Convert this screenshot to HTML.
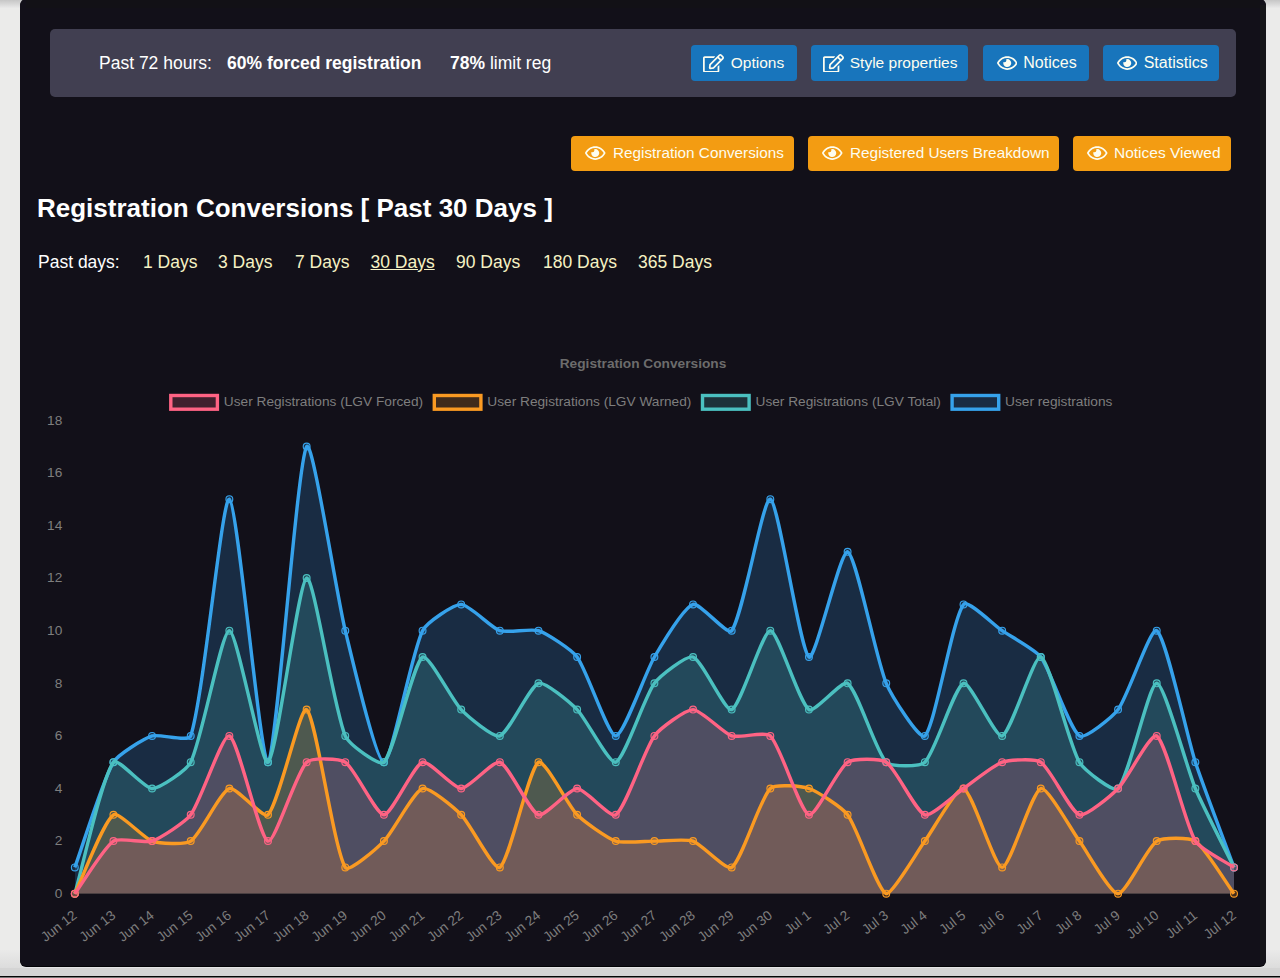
<!DOCTYPE html>
<html><head><meta charset="utf-8"><style>
html,body{margin:0;padding:0}
body{width:1280px;height:978px;overflow:hidden;position:relative;background:#ebebea;font-family:"Liberation Sans",sans-serif}
.topgrad{position:absolute;left:0;top:0;width:1280px;height:8px;background:linear-gradient(#c6c6c6,#e9e9e9)}
.panel{position:absolute;left:20px;top:-1px;width:1246px;height:967px;border-radius:6px;background:#121019;box-shadow:0 1px 0 #030306, 0 2px 0 #e4e4e6}
.topband{position:absolute;left:6px;top:1px;width:1234px;height:8px;background:#121116}
.band{position:absolute;left:1240px;top:6px;width:6px;height:955px;background:#151518}
.bgrad{position:absolute;left:0;top:950px;width:1280px;height:18px;background:linear-gradient(#eaeae9,#dcdcdc)}
.bottom{position:absolute;left:0;top:968px;width:1280px;height:8px;background:#d4d4d4}
.bline{position:absolute;left:0;top:976px;width:1280px;height:1px;background:#050505}
.bgray{position:absolute;left:0;top:977px;width:1280px;height:1px;background:#777}
.info{position:absolute;left:30px;top:30.25px;width:1186px;height:67.3px;border-radius:5px;background:#413f51}
.t{position:absolute;white-space:nowrap;line-height:1;color:#fff}
.btn{position:absolute;border-radius:4px}
.blue{background:#1875bc}
.orange{background:#f39c12}
.icw{position:absolute;top:0;height:100%;display:flex;align-items:center;color:#fdfdf0}
.bt{position:absolute;top:0;height:100%;display:flex;align-items:center;font-size:15.5px;color:#fdfdf0;white-space:nowrap}
.d{color:#f6f2c4;font-size:17.5px}
.chart{position:absolute;left:0;top:0}
</style></head><body>
<div class="topgrad"></div>
<div class="bgrad"></div><div class="bottom"></div><div class="bline"></div><div class="bgray"></div>
<div class="panel">
 <div class="topband"></div>
 <div class="band"></div>
 <div class="info">
  <div class="t" style="left:49px;top:26px;font-size:17.5px">Past 72 hours:</div>
  <div class="t" style="left:177px;top:26px;font-size:17.5px;font-weight:bold">60% forced registration</div>
  <div class="t" style="left:400px;top:26px;font-size:17.5px"><b>78%</b> limit reg</div>
  <div class="btn blue" style="left:641.25px;top:15.9px;width:105.5px;height:35.6px"><span class="icw" style="left:12px"><svg viewBox="0 0 576 512" width="21" height="18.7" style="display:block"><path fill="currentColor" d="M402.3 344.9l32-32c5-5 13.7-1.5 13.7 5.7V464c0 26.5-21.5 48-48 48H48c-26.5 0-48-21.5-48-48V112c0-26.5 21.5-48 48-48h273.5c7.1 0 10.7 8.6 5.7 13.7l-32 32c-1.5 1.5-3.5 2.3-5.7 2.3H48v352h352V350.5c0-2.1.8-4.1 2.3-5.6zm156.6-201.8L296.3 405.7l-90.4 10c-26.2 2.9-48.5-19.2-45.6-45.6l10-90.4L432.9 17.1c22.9-22.9 59.9-22.9 82.7 0l43.2 43.2c22.9 22.9 22.9 60 .1 82.8zM460.1 174L402 115.9 216.2 301.8l-7.3 65.3 65.3-7.3L460.1 174zm64.8-79.7l-43.2-43.2c-4.1-4.1-10.8-4.1-14.8 0L436 82l58.1 58.1 30.9-30.9c4-4.2 4-10.8-.1-14.9z"/></svg></span><span class="bt" style="left:39.5px;font-size:15.5px">Options</span></div>
  <div class="btn blue" style="left:761.25px;top:15.9px;width:157px;height:35.6px"><span class="icw" style="left:12px"><svg viewBox="0 0 576 512" width="21" height="18.7" style="display:block"><path fill="currentColor" d="M402.3 344.9l32-32c5-5 13.7-1.5 13.7 5.7V464c0 26.5-21.5 48-48 48H48c-26.5 0-48-21.5-48-48V112c0-26.5 21.5-48 48-48h273.5c7.1 0 10.7 8.6 5.7 13.7l-32 32c-1.5 1.5-3.5 2.3-5.7 2.3H48v352h352V350.5c0-2.1.8-4.1 2.3-5.6zm156.6-201.8L296.3 405.7l-90.4 10c-26.2 2.9-48.5-19.2-45.6-45.6l10-90.4L432.9 17.1c22.9-22.9 59.9-22.9 82.7 0l43.2 43.2c22.9 22.9 22.9 60 .1 82.8zM460.1 174L402 115.9 216.2 301.8l-7.3 65.3 65.3-7.3L460.1 174zm64.8-79.7l-43.2-43.2c-4.1-4.1-10.8-4.1-14.8 0L436 82l58.1 58.1 30.9-30.9c4-4.2 4-10.8-.1-14.9z"/></svg></span><span class="bt" style="left:38.5px;font-size:15.5px">Style properties</span></div>
  <div class="btn blue" style="left:933.1px;top:15.9px;width:105.5px;height:35.6px"><span class="icw" style="left:13.5px"><svg viewBox="0 0 576 512" width="20.5" height="18.2" style="display:block"><path fill="currentColor" d="M288 144a110.94 110.94 0 0 0-31.24 5 55.4 55.4 0 0 1 7.24 27 56 56 0 0 1-56 56 55.4 55.4 0 0 1-27-7.24A111.71 111.71 0 1 0 288 144zm284.52 97.4C518.29 135.59 410.93 64 288 64S57.68 135.64 3.48 241.41a32.35 32.35 0 0 0 0 29.19C57.71 376.41 165.07 448 288 448s230.32-71.64 284.52-177.41a32.35 32.35 0 0 0 0-29.19zM288 400c-98.65 0-189.09-55-237.93-144C98.91 167 189.34 112 288 112s189.09 55 237.93 144C477.1 345 386.66 400 288 400z"/></svg></span><span class="bt" style="left:40.2px;font-size:16px">Notices</span></div>
  <div class="btn blue" style="left:1053px;top:15.9px;width:115.8px;height:35.6px"><span class="icw" style="left:13.5px"><svg viewBox="0 0 576 512" width="20.5" height="18.2" style="display:block"><path fill="currentColor" d="M288 144a110.94 110.94 0 0 0-31.24 5 55.4 55.4 0 0 1 7.24 27 56 56 0 0 1-56 56 55.4 55.4 0 0 1-27-7.24A111.71 111.71 0 1 0 288 144zm284.52 97.4C518.29 135.59 410.93 64 288 64S57.68 135.64 3.48 241.41a32.35 32.35 0 0 0 0 29.19C57.71 376.41 165.07 448 288 448s230.32-71.64 284.52-177.41a32.35 32.35 0 0 0 0-29.19zM288 400c-98.65 0-189.09-55-237.93-144C98.91 167 189.34 112 288 112s189.09 55 237.93 144C477.1 345 386.66 400 288 400z"/></svg></span><span class="bt" style="left:40.7px;font-size:16px">Statistics</span></div>
 </div>
 <div class="btn orange" style="left:551.2px;top:137.2px;width:222.5px;height:34.4px"><span class="icw" style="left:14px"><svg viewBox="0 0 576 512" width="20.5" height="18.2" style="display:block"><path fill="currentColor" d="M288 144a110.94 110.94 0 0 0-31.24 5 55.4 55.4 0 0 1 7.24 27 56 56 0 0 1-56 56 55.4 55.4 0 0 1-27-7.24A111.71 111.71 0 1 0 288 144zm284.52 97.4C518.29 135.59 410.93 64 288 64S57.68 135.64 3.48 241.41a32.35 32.35 0 0 0 0 29.19C57.71 376.41 165.07 448 288 448s230.32-71.64 284.52-177.41a32.35 32.35 0 0 0 0-29.19zM288 400c-98.65 0-189.09-55-237.93-144C98.91 167 189.34 112 288 112s189.09 55 237.93 144C477.1 345 386.66 400 288 400z"/></svg></span><span class="bt" style="left:41.8px;font-size:15.3px">Registration Conversions</span></div>
 <div class="btn orange" style="left:788.4px;top:137.2px;width:250.6px;height:34.4px"><span class="icw" style="left:14px"><svg viewBox="0 0 576 512" width="20.5" height="18.2" style="display:block"><path fill="currentColor" d="M288 144a110.94 110.94 0 0 0-31.24 5 55.4 55.4 0 0 1 7.24 27 56 56 0 0 1-56 56 55.4 55.4 0 0 1-27-7.24A111.71 111.71 0 1 0 288 144zm284.52 97.4C518.29 135.59 410.93 64 288 64S57.68 135.64 3.48 241.41a32.35 32.35 0 0 0 0 29.19C57.71 376.41 165.07 448 288 448s230.32-71.64 284.52-177.41a32.35 32.35 0 0 0 0-29.19zM288 400c-98.65 0-189.09-55-237.93-144C98.91 167 189.34 112 288 112s189.09 55 237.93 144C477.1 345 386.66 400 288 400z"/></svg></span><span class="bt" style="left:41.6px;font-size:15.35px">Registered Users Breakdown</span></div>
 <div class="btn orange" style="left:1053px;top:137.2px;width:158.4px;height:34.4px"><span class="icw" style="left:14px"><svg viewBox="0 0 576 512" width="20.5" height="18.2" style="display:block"><path fill="currentColor" d="M288 144a110.94 110.94 0 0 0-31.24 5 55.4 55.4 0 0 1 7.24 27 56 56 0 0 1-56 56 55.4 55.4 0 0 1-27-7.24A111.71 111.71 0 1 0 288 144zm284.52 97.4C518.29 135.59 410.93 64 288 64S57.68 135.64 3.48 241.41a32.35 32.35 0 0 0 0 29.19C57.71 376.41 165.07 448 288 448s230.32-71.64 284.52-177.41a32.35 32.35 0 0 0 0-29.19zM288 400c-98.65 0-189.09-55-237.93-144C98.91 167 189.34 112 288 112s189.09 55 237.93 144C477.1 345 386.66 400 288 400z"/></svg></span><span class="bt" style="left:41px;font-size:15.5px">Notices Viewed</span></div>
 <div class="t" style="left:17px;top:195.9px;font-size:26px;font-weight:bold">Registration Conversions [ Past 30 Days ]</div>
 <div class="t" style="left:18px;top:254.5px;font-size:17.5px">Past days:</div>
 <div class="t d" style="left:123px;top:254.5px">1 Days</div>
 <div class="t d" style="left:198px;top:254.5px">3 Days</div>
 <div class="t d" style="left:275px;top:254.5px">7 Days</div>
 <div class="t d" style="left:350.5px;top:254.5px;text-decoration:underline">30 Days</div>
 <div class="t d" style="left:436px;top:254.5px">90 Days</div>
 <div class="t d" style="left:523px;top:254.5px">180 Days</div>
 <div class="t d" style="left:618px;top:254.5px">365 Days</div>
</div>
<svg class="chart" width="1280" height="978" viewBox="0 0 1280 978" font-family="Liberation Sans, sans-serif">
<defs><clipPath id="ca"><rect x="74.8" y="420.3" width="1159.2" height="473.4"/></clipPath><clipPath id="cl"><rect x="72.8" y="418.3" width="1163.2" height="477.4"/></clipPath></defs>
<g clip-path="url(#ca)"><path d="M74.8 867.4C82.53 846.36 102.53 780.76 113.44 762.2C117.99 754.46 143.62 738.78 152.08 735.9C159.07 733.52 188.58 742.47 190.72 735.9C204.03 695.13 222.03 496.71 229.36 499.2C237.49 501.97 260.96 766.99 268 762.2C276.42 756.47 296.93 463.12 306.64 446.6C312.39 436.82 336.34 594.19 345.28 630.7C351.79 657.31 376.19 762.2 383.92 762.2C391.65 762.2 411.03 654.23 422.56 630.7C426.49 622.67 453.47 604.4 461.2 604.4C468.93 604.4 491.38 627.82 499.84 630.7C506.83 633.08 531.49 628.32 538.48 630.7C546.94 633.58 571.75 649.69 577.12 657C587.21 670.73 608.03 735.9 615.76 735.9C623.49 735.9 645.53 672.09 654.4 657C660.99 645.79 684.03 607.46 693.04 604.4C699.49 602.2 727.75 636.05 731.68 630.7C743.21 615.01 763.25 496.79 770.32 499.2C778.7 502.05 799.81 650.77 808.96 657C815.27 661.29 840.65 549.43 847.6 551.8C856.1 554.69 875.77 658.36 886.24 683.3C891.23 695.18 919.89 740.99 924.88 735.9C935.35 725.21 951.99 620.09 963.52 604.4C967.45 599.05 994.43 625.44 1002.16 630.7C1009.89 635.96 1035.43 649.69 1040.8 657C1050.89 670.73 1069.35 729.03 1079.44 735.9C1084.81 739.55 1112.71 716.91 1118.08 709.6C1128.17 695.87 1150.68 626.59 1156.72 630.7C1166.14 637.11 1186.86 736.16 1195.36 762.2C1202.31 783.5 1226.27 846.36 1234 867.4L1234 893.7L74.8 893.7Z" fill="rgba(54,162,235,0.2)"/><path d="M74.8 893.7C82.53 867.4 101.91 777.89 113.44 762.2C117.37 756.85 144.35 788.5 152.08 788.5C159.81 788.5 186.79 770.23 190.72 762.2C202.25 738.67 221.63 630.7 229.36 630.7C237.09 630.7 261.49 766.63 268 762.2C276.94 756.11 298.35 580.92 306.64 578.1C313.8 575.66 333.28 707.31 345.28 735.9C348.73 744.13 379.37 766.84 383.92 762.2C394.83 751.06 412.79 663.65 422.56 657C428.25 653.13 452.19 700.41 461.2 709.6C467.65 716.19 493.39 738.1 499.84 735.9C508.85 732.84 529.47 686.36 538.48 683.3C544.93 681.1 570.67 703.01 577.12 709.6C586.13 718.79 609.17 764.44 615.76 762.2C624.63 759.18 644.31 697.03 654.4 683.3C659.77 675.99 686.59 654.8 693.04 657C702.05 660.06 725.09 711.84 731.68 709.6C740.55 706.58 762.59 630.7 770.32 630.7C778.05 630.7 798.87 702.73 808.96 709.6C814.33 713.25 842.23 679.65 847.6 683.3C857.69 690.17 875.51 751.24 886.24 762.2C890.96 767.02 920.16 767.02 924.88 762.2C935.61 751.24 954.65 686.32 963.52 683.3C970.11 681.06 995.57 738.14 1002.16 735.9C1011.03 732.88 1034.01 654.69 1040.8 657C1049.46 659.95 1068.53 743.64 1079.44 762.2C1083.99 769.94 1113.53 793.14 1118.08 788.5C1128.99 777.36 1148.99 683.3 1156.72 683.3C1164.45 683.3 1186.7 767.86 1195.36 788.5C1202.15 804.68 1226.27 851.62 1234 867.4L1234 893.7L74.8 893.7Z" fill="rgba(75,192,192,0.2)"/><path d="M74.8 893.7C82.53 877.92 103.35 821.67 113.44 814.8C118.81 811.15 143.62 838.22 152.08 841.1C159.07 843.48 184.97 845.01 190.72 841.1C200.43 834.49 220.35 791.56 229.36 788.5C235.81 786.3 263.45 819.44 268 814.8C278.91 803.66 300.33 705.31 306.64 709.6C315.79 715.83 333.28 846.98 345.28 867.4C348.73 873.28 377.47 847.69 383.92 841.1C392.93 831.91 413.55 791.56 422.56 788.5C429.01 786.3 454.75 808.21 461.2 814.8C470.21 823.99 494.15 871.27 499.84 867.4C509.61 860.75 528.71 768.85 538.48 762.2C544.17 758.33 568.11 805.61 577.12 814.8C583.57 821.39 607.3 838.22 615.76 841.1C622.75 843.48 646.67 841.1 654.4 841.1C662.13 841.1 686.05 838.72 693.04 841.1C701.5 843.98 726.31 871.05 731.68 867.4C741.77 860.53 759.59 799.46 770.32 788.5C775.04 783.68 801.97 786.12 808.96 788.5C817.42 791.38 842.23 807.49 847.6 814.8C857.69 828.53 877.37 890.68 886.24 893.7C892.83 893.7 917.15 851.62 924.88 841.1C932.61 830.58 956.93 786.26 963.52 788.5C972.39 791.52 994.43 867.4 1002.16 867.4C1009.89 867.4 1031.93 791.52 1040.8 788.5C1047.39 786.26 1071.71 830.58 1079.44 841.1C1087.17 851.62 1110.35 893.7 1118.08 893.7C1125.81 893.7 1147.01 847.71 1156.72 841.1C1162.47 837.19 1189.61 837.19 1195.36 841.1C1205.07 847.71 1226.27 883.18 1234 893.7L1234 893.7L74.8 893.7Z" fill="rgba(250,154,34,0.2)"/><path d="M74.8 893.7C82.53 883.18 103.73 847.71 113.44 841.1C119.19 837.19 145.09 843.48 152.08 841.1C160.54 838.22 185.35 822.11 190.72 814.8C200.81 801.07 222.57 733.59 229.36 735.9C238.02 738.85 259.34 838.15 268 841.1C274.79 843.41 295.91 773.16 306.64 762.2C311.36 757.38 339.53 758.29 345.28 762.2C354.99 768.81 376.19 814.8 383.92 814.8C391.65 814.8 413.55 765.26 422.56 762.2C429.01 760 453.47 788.5 461.2 788.5C468.93 788.5 493.39 760 499.84 762.2C508.85 765.26 529.47 811.74 538.48 814.8C544.93 817 569.39 788.5 577.12 788.5C584.85 788.5 610.39 818.45 615.76 814.8C625.85 807.93 644.31 749.63 654.4 735.9C659.77 728.59 685.31 709.6 693.04 709.6C700.77 709.6 723.22 733.02 731.68 735.9C738.67 738.28 765.6 731.08 770.32 735.9C781.05 746.86 800.09 811.78 808.96 814.8C815.55 817.04 837.89 768.81 847.6 762.2C853.35 758.29 880.49 758.29 886.24 762.2C895.95 768.81 915.87 811.74 924.88 814.8C931.33 817 955.79 793.76 963.52 788.5C971.25 783.24 993.7 765.08 1002.16 762.2C1009.15 759.82 1035.05 758.29 1040.8 762.2C1050.51 768.81 1070.43 811.74 1079.44 814.8C1085.89 817 1111.63 795.09 1118.08 788.5C1127.09 779.31 1151.03 732.03 1156.72 735.9C1166.49 742.55 1184.45 822.54 1195.36 841.1C1199.91 848.84 1226.27 862.14 1234 867.4L1234 893.7L74.8 893.7Z" fill="rgba(255,99,132,0.2)"/></g>
<path d="M74.8 867.4C82.53 846.36 102.53 780.76 113.44 762.2C117.99 754.46 143.62 738.78 152.08 735.9C159.07 733.52 188.58 742.47 190.72 735.9C204.03 695.13 222.03 496.71 229.36 499.2C237.49 501.97 260.96 766.99 268 762.2C276.42 756.47 296.93 463.12 306.64 446.6C312.39 436.82 336.34 594.19 345.28 630.7C351.79 657.31 376.19 762.2 383.92 762.2C391.65 762.2 411.03 654.23 422.56 630.7C426.49 622.67 453.47 604.4 461.2 604.4C468.93 604.4 491.38 627.82 499.84 630.7C506.83 633.08 531.49 628.32 538.48 630.7C546.94 633.58 571.75 649.69 577.12 657C587.21 670.73 608.03 735.9 615.76 735.9C623.49 735.9 645.53 672.09 654.4 657C660.99 645.79 684.03 607.46 693.04 604.4C699.49 602.2 727.75 636.05 731.68 630.7C743.21 615.01 763.25 496.79 770.32 499.2C778.7 502.05 799.81 650.77 808.96 657C815.27 661.29 840.65 549.43 847.6 551.8C856.1 554.69 875.77 658.36 886.24 683.3C891.23 695.18 919.89 740.99 924.88 735.9C935.35 725.21 951.99 620.09 963.52 604.4C967.45 599.05 994.43 625.44 1002.16 630.7C1009.89 635.96 1035.43 649.69 1040.8 657C1050.89 670.73 1069.35 729.03 1079.44 735.9C1084.81 739.55 1112.71 716.91 1118.08 709.6C1128.17 695.87 1150.68 626.59 1156.72 630.7C1166.14 637.11 1186.86 736.16 1195.36 762.2C1202.31 783.5 1226.27 846.36 1234 867.4" fill="none" stroke="rgb(54,162,235)" stroke-width="3.42" clip-path="url(#cl)"/>
<g fill="rgba(54,162,235,0.2)" stroke="rgb(54,162,235)" stroke-width="1.14"><circle cx="74.8" cy="867.4" r="3.42"/><circle cx="113.44" cy="762.2" r="3.42"/><circle cx="152.08" cy="735.9" r="3.42"/><circle cx="190.72" cy="735.9" r="3.42"/><circle cx="229.36" cy="499.2" r="3.42"/><circle cx="268" cy="762.2" r="3.42"/><circle cx="306.64" cy="446.6" r="3.42"/><circle cx="345.28" cy="630.7" r="3.42"/><circle cx="383.92" cy="762.2" r="3.42"/><circle cx="422.56" cy="630.7" r="3.42"/><circle cx="461.2" cy="604.4" r="3.42"/><circle cx="499.84" cy="630.7" r="3.42"/><circle cx="538.48" cy="630.7" r="3.42"/><circle cx="577.12" cy="657" r="3.42"/><circle cx="615.76" cy="735.9" r="3.42"/><circle cx="654.4" cy="657" r="3.42"/><circle cx="693.04" cy="604.4" r="3.42"/><circle cx="731.68" cy="630.7" r="3.42"/><circle cx="770.32" cy="499.2" r="3.42"/><circle cx="808.96" cy="657" r="3.42"/><circle cx="847.6" cy="551.8" r="3.42"/><circle cx="886.24" cy="683.3" r="3.42"/><circle cx="924.88" cy="735.9" r="3.42"/><circle cx="963.52" cy="604.4" r="3.42"/><circle cx="1002.16" cy="630.7" r="3.42"/><circle cx="1040.8" cy="657" r="3.42"/><circle cx="1079.44" cy="735.9" r="3.42"/><circle cx="1118.08" cy="709.6" r="3.42"/><circle cx="1156.72" cy="630.7" r="3.42"/><circle cx="1195.36" cy="762.2" r="3.42"/><circle cx="1234" cy="867.4" r="3.42"/></g>
<path d="M74.8 893.7C82.53 867.4 101.91 777.89 113.44 762.2C117.37 756.85 144.35 788.5 152.08 788.5C159.81 788.5 186.79 770.23 190.72 762.2C202.25 738.67 221.63 630.7 229.36 630.7C237.09 630.7 261.49 766.63 268 762.2C276.94 756.11 298.35 580.92 306.64 578.1C313.8 575.66 333.28 707.31 345.28 735.9C348.73 744.13 379.37 766.84 383.92 762.2C394.83 751.06 412.79 663.65 422.56 657C428.25 653.13 452.19 700.41 461.2 709.6C467.65 716.19 493.39 738.1 499.84 735.9C508.85 732.84 529.47 686.36 538.48 683.3C544.93 681.1 570.67 703.01 577.12 709.6C586.13 718.79 609.17 764.44 615.76 762.2C624.63 759.18 644.31 697.03 654.4 683.3C659.77 675.99 686.59 654.8 693.04 657C702.05 660.06 725.09 711.84 731.68 709.6C740.55 706.58 762.59 630.7 770.32 630.7C778.05 630.7 798.87 702.73 808.96 709.6C814.33 713.25 842.23 679.65 847.6 683.3C857.69 690.17 875.51 751.24 886.24 762.2C890.96 767.02 920.16 767.02 924.88 762.2C935.61 751.24 954.65 686.32 963.52 683.3C970.11 681.06 995.57 738.14 1002.16 735.9C1011.03 732.88 1034.01 654.69 1040.8 657C1049.46 659.95 1068.53 743.64 1079.44 762.2C1083.99 769.94 1113.53 793.14 1118.08 788.5C1128.99 777.36 1148.99 683.3 1156.72 683.3C1164.45 683.3 1186.7 767.86 1195.36 788.5C1202.15 804.68 1226.27 851.62 1234 867.4" fill="none" stroke="rgb(75,192,192)" stroke-width="3.42" clip-path="url(#cl)"/>
<g fill="rgba(75,192,192,0.2)" stroke="rgb(75,192,192)" stroke-width="1.14"><circle cx="74.8" cy="893.7" r="3.42"/><circle cx="113.44" cy="762.2" r="3.42"/><circle cx="152.08" cy="788.5" r="3.42"/><circle cx="190.72" cy="762.2" r="3.42"/><circle cx="229.36" cy="630.7" r="3.42"/><circle cx="268" cy="762.2" r="3.42"/><circle cx="306.64" cy="578.1" r="3.42"/><circle cx="345.28" cy="735.9" r="3.42"/><circle cx="383.92" cy="762.2" r="3.42"/><circle cx="422.56" cy="657" r="3.42"/><circle cx="461.2" cy="709.6" r="3.42"/><circle cx="499.84" cy="735.9" r="3.42"/><circle cx="538.48" cy="683.3" r="3.42"/><circle cx="577.12" cy="709.6" r="3.42"/><circle cx="615.76" cy="762.2" r="3.42"/><circle cx="654.4" cy="683.3" r="3.42"/><circle cx="693.04" cy="657" r="3.42"/><circle cx="731.68" cy="709.6" r="3.42"/><circle cx="770.32" cy="630.7" r="3.42"/><circle cx="808.96" cy="709.6" r="3.42"/><circle cx="847.6" cy="683.3" r="3.42"/><circle cx="886.24" cy="762.2" r="3.42"/><circle cx="924.88" cy="762.2" r="3.42"/><circle cx="963.52" cy="683.3" r="3.42"/><circle cx="1002.16" cy="735.9" r="3.42"/><circle cx="1040.8" cy="657" r="3.42"/><circle cx="1079.44" cy="762.2" r="3.42"/><circle cx="1118.08" cy="788.5" r="3.42"/><circle cx="1156.72" cy="683.3" r="3.42"/><circle cx="1195.36" cy="788.5" r="3.42"/><circle cx="1234" cy="867.4" r="3.42"/></g>
<path d="M74.8 893.7C82.53 877.92 103.35 821.67 113.44 814.8C118.81 811.15 143.62 838.22 152.08 841.1C159.07 843.48 184.97 845.01 190.72 841.1C200.43 834.49 220.35 791.56 229.36 788.5C235.81 786.3 263.45 819.44 268 814.8C278.91 803.66 300.33 705.31 306.64 709.6C315.79 715.83 333.28 846.98 345.28 867.4C348.73 873.28 377.47 847.69 383.92 841.1C392.93 831.91 413.55 791.56 422.56 788.5C429.01 786.3 454.75 808.21 461.2 814.8C470.21 823.99 494.15 871.27 499.84 867.4C509.61 860.75 528.71 768.85 538.48 762.2C544.17 758.33 568.11 805.61 577.12 814.8C583.57 821.39 607.3 838.22 615.76 841.1C622.75 843.48 646.67 841.1 654.4 841.1C662.13 841.1 686.05 838.72 693.04 841.1C701.5 843.98 726.31 871.05 731.68 867.4C741.77 860.53 759.59 799.46 770.32 788.5C775.04 783.68 801.97 786.12 808.96 788.5C817.42 791.38 842.23 807.49 847.6 814.8C857.69 828.53 877.37 890.68 886.24 893.7C892.83 893.7 917.15 851.62 924.88 841.1C932.61 830.58 956.93 786.26 963.52 788.5C972.39 791.52 994.43 867.4 1002.16 867.4C1009.89 867.4 1031.93 791.52 1040.8 788.5C1047.39 786.26 1071.71 830.58 1079.44 841.1C1087.17 851.62 1110.35 893.7 1118.08 893.7C1125.81 893.7 1147.01 847.71 1156.72 841.1C1162.47 837.19 1189.61 837.19 1195.36 841.1C1205.07 847.71 1226.27 883.18 1234 893.7" fill="none" stroke="rgb(250,154,34)" stroke-width="3.42" clip-path="url(#cl)"/>
<g fill="rgba(250,154,34,0.2)" stroke="rgb(250,154,34)" stroke-width="1.14"><circle cx="74.8" cy="893.7" r="3.42"/><circle cx="113.44" cy="814.8" r="3.42"/><circle cx="152.08" cy="841.1" r="3.42"/><circle cx="190.72" cy="841.1" r="3.42"/><circle cx="229.36" cy="788.5" r="3.42"/><circle cx="268" cy="814.8" r="3.42"/><circle cx="306.64" cy="709.6" r="3.42"/><circle cx="345.28" cy="867.4" r="3.42"/><circle cx="383.92" cy="841.1" r="3.42"/><circle cx="422.56" cy="788.5" r="3.42"/><circle cx="461.2" cy="814.8" r="3.42"/><circle cx="499.84" cy="867.4" r="3.42"/><circle cx="538.48" cy="762.2" r="3.42"/><circle cx="577.12" cy="814.8" r="3.42"/><circle cx="615.76" cy="841.1" r="3.42"/><circle cx="654.4" cy="841.1" r="3.42"/><circle cx="693.04" cy="841.1" r="3.42"/><circle cx="731.68" cy="867.4" r="3.42"/><circle cx="770.32" cy="788.5" r="3.42"/><circle cx="808.96" cy="788.5" r="3.42"/><circle cx="847.6" cy="814.8" r="3.42"/><circle cx="886.24" cy="893.7" r="3.42"/><circle cx="924.88" cy="841.1" r="3.42"/><circle cx="963.52" cy="788.5" r="3.42"/><circle cx="1002.16" cy="867.4" r="3.42"/><circle cx="1040.8" cy="788.5" r="3.42"/><circle cx="1079.44" cy="841.1" r="3.42"/><circle cx="1118.08" cy="893.7" r="3.42"/><circle cx="1156.72" cy="841.1" r="3.42"/><circle cx="1195.36" cy="841.1" r="3.42"/><circle cx="1234" cy="893.7" r="3.42"/></g>
<path d="M74.8 893.7C82.53 883.18 103.73 847.71 113.44 841.1C119.19 837.19 145.09 843.48 152.08 841.1C160.54 838.22 185.35 822.11 190.72 814.8C200.81 801.07 222.57 733.59 229.36 735.9C238.02 738.85 259.34 838.15 268 841.1C274.79 843.41 295.91 773.16 306.64 762.2C311.36 757.38 339.53 758.29 345.28 762.2C354.99 768.81 376.19 814.8 383.92 814.8C391.65 814.8 413.55 765.26 422.56 762.2C429.01 760 453.47 788.5 461.2 788.5C468.93 788.5 493.39 760 499.84 762.2C508.85 765.26 529.47 811.74 538.48 814.8C544.93 817 569.39 788.5 577.12 788.5C584.85 788.5 610.39 818.45 615.76 814.8C625.85 807.93 644.31 749.63 654.4 735.9C659.77 728.59 685.31 709.6 693.04 709.6C700.77 709.6 723.22 733.02 731.68 735.9C738.67 738.28 765.6 731.08 770.32 735.9C781.05 746.86 800.09 811.78 808.96 814.8C815.55 817.04 837.89 768.81 847.6 762.2C853.35 758.29 880.49 758.29 886.24 762.2C895.95 768.81 915.87 811.74 924.88 814.8C931.33 817 955.79 793.76 963.52 788.5C971.25 783.24 993.7 765.08 1002.16 762.2C1009.15 759.82 1035.05 758.29 1040.8 762.2C1050.51 768.81 1070.43 811.74 1079.44 814.8C1085.89 817 1111.63 795.09 1118.08 788.5C1127.09 779.31 1151.03 732.03 1156.72 735.9C1166.49 742.55 1184.45 822.54 1195.36 841.1C1199.91 848.84 1226.27 862.14 1234 867.4" fill="none" stroke="rgb(255,99,132)" stroke-width="3.42" clip-path="url(#cl)"/>
<g fill="rgba(255,99,132,0.2)" stroke="rgb(255,99,132)" stroke-width="1.14"><circle cx="74.8" cy="893.7" r="3.42"/><circle cx="113.44" cy="841.1" r="3.42"/><circle cx="152.08" cy="841.1" r="3.42"/><circle cx="190.72" cy="814.8" r="3.42"/><circle cx="229.36" cy="735.9" r="3.42"/><circle cx="268" cy="841.1" r="3.42"/><circle cx="306.64" cy="762.2" r="3.42"/><circle cx="345.28" cy="762.2" r="3.42"/><circle cx="383.92" cy="814.8" r="3.42"/><circle cx="422.56" cy="762.2" r="3.42"/><circle cx="461.2" cy="788.5" r="3.42"/><circle cx="499.84" cy="762.2" r="3.42"/><circle cx="538.48" cy="814.8" r="3.42"/><circle cx="577.12" cy="788.5" r="3.42"/><circle cx="615.76" cy="814.8" r="3.42"/><circle cx="654.4" cy="735.9" r="3.42"/><circle cx="693.04" cy="709.6" r="3.42"/><circle cx="731.68" cy="735.9" r="3.42"/><circle cx="770.32" cy="735.9" r="3.42"/><circle cx="808.96" cy="814.8" r="3.42"/><circle cx="847.6" cy="762.2" r="3.42"/><circle cx="886.24" cy="762.2" r="3.42"/><circle cx="924.88" cy="814.8" r="3.42"/><circle cx="963.52" cy="788.5" r="3.42"/><circle cx="1002.16" cy="762.2" r="3.42"/><circle cx="1040.8" cy="762.2" r="3.42"/><circle cx="1079.44" cy="814.8" r="3.42"/><circle cx="1118.08" cy="788.5" r="3.42"/><circle cx="1156.72" cy="735.9" r="3.42"/><circle cx="1195.36" cy="841.1" r="3.42"/><circle cx="1234" cy="867.4" r="3.42"/></g>
<text x="643" y="368.3" text-anchor="middle" font-size="13.7" font-weight="bold" fill="#6c6c6c">Registration Conversions</text>
<rect x="170.8" y="395.5" width="46.6" height="13.7" fill="rgba(255,99,132,0.2)" stroke="rgb(255,99,132)" stroke-width="3.4"/>
<text x="223.80" y="406.3" font-size="13.7" fill="#7e7e7e">User Registrations (LGV Forced)</text>
<rect x="434.3" y="395.5" width="46.6" height="13.7" fill="rgba(250,154,34,0.2)" stroke="rgb(250,154,34)" stroke-width="3.4"/>
<text x="487.30" y="406.3" font-size="13.7" fill="#7e7e7e">User Registrations (LGV Warned)</text>
<rect x="702.5" y="395.5" width="46.6" height="13.7" fill="rgba(75,192,192,0.2)" stroke="rgb(75,192,192)" stroke-width="3.4"/>
<text x="755.50" y="406.3" font-size="13.7" fill="#7e7e7e">User Registrations (LGV Total)</text>
<rect x="952.1" y="395.5" width="46.6" height="13.7" fill="rgba(54,162,235,0.2)" stroke="rgb(54,162,235)" stroke-width="3.4"/>
<text x="1005.10" y="406.3" font-size="13.7" fill="#7e7e7e">User registrations</text>
<text x="62.3" y="897.90" text-anchor="end" font-size="13.7" fill="#7e7e7e">0</text>
<text x="62.3" y="845.30" text-anchor="end" font-size="13.7" fill="#7e7e7e">2</text>
<text x="62.3" y="792.70" text-anchor="end" font-size="13.7" fill="#7e7e7e">4</text>
<text x="62.3" y="740.10" text-anchor="end" font-size="13.7" fill="#7e7e7e">6</text>
<text x="62.3" y="687.50" text-anchor="end" font-size="13.7" fill="#7e7e7e">8</text>
<text x="62.3" y="634.90" text-anchor="end" font-size="13.7" fill="#7e7e7e">10</text>
<text x="62.3" y="582.30" text-anchor="end" font-size="13.7" fill="#7e7e7e">12</text>
<text x="62.3" y="529.70" text-anchor="end" font-size="13.7" fill="#7e7e7e">14</text>
<text x="62.3" y="477.10" text-anchor="end" font-size="13.7" fill="#7e7e7e">16</text>
<text x="62.3" y="424.50" text-anchor="end" font-size="13.7" fill="#7e7e7e">18</text>
<text x="74.80" y="913.20" dy="4.9" text-anchor="end" font-size="13.7" fill="#7e7e7e" transform="rotate(-38.0 74.80 913.20)">Jun 12</text>
<text x="113.44" y="913.20" dy="4.9" text-anchor="end" font-size="13.7" fill="#7e7e7e" transform="rotate(-38.0 113.44 913.20)">Jun 13</text>
<text x="152.08" y="913.20" dy="4.9" text-anchor="end" font-size="13.7" fill="#7e7e7e" transform="rotate(-38.0 152.08 913.20)">Jun 14</text>
<text x="190.72" y="913.20" dy="4.9" text-anchor="end" font-size="13.7" fill="#7e7e7e" transform="rotate(-38.0 190.72 913.20)">Jun 15</text>
<text x="229.36" y="913.20" dy="4.9" text-anchor="end" font-size="13.7" fill="#7e7e7e" transform="rotate(-38.0 229.36 913.20)">Jun 16</text>
<text x="268.00" y="913.20" dy="4.9" text-anchor="end" font-size="13.7" fill="#7e7e7e" transform="rotate(-38.0 268.00 913.20)">Jun 17</text>
<text x="306.64" y="913.20" dy="4.9" text-anchor="end" font-size="13.7" fill="#7e7e7e" transform="rotate(-38.0 306.64 913.20)">Jun 18</text>
<text x="345.28" y="913.20" dy="4.9" text-anchor="end" font-size="13.7" fill="#7e7e7e" transform="rotate(-38.0 345.28 913.20)">Jun 19</text>
<text x="383.92" y="913.20" dy="4.9" text-anchor="end" font-size="13.7" fill="#7e7e7e" transform="rotate(-38.0 383.92 913.20)">Jun 20</text>
<text x="422.56" y="913.20" dy="4.9" text-anchor="end" font-size="13.7" fill="#7e7e7e" transform="rotate(-38.0 422.56 913.20)">Jun 21</text>
<text x="461.20" y="913.20" dy="4.9" text-anchor="end" font-size="13.7" fill="#7e7e7e" transform="rotate(-38.0 461.20 913.20)">Jun 22</text>
<text x="499.84" y="913.20" dy="4.9" text-anchor="end" font-size="13.7" fill="#7e7e7e" transform="rotate(-38.0 499.84 913.20)">Jun 23</text>
<text x="538.48" y="913.20" dy="4.9" text-anchor="end" font-size="13.7" fill="#7e7e7e" transform="rotate(-38.0 538.48 913.20)">Jun 24</text>
<text x="577.12" y="913.20" dy="4.9" text-anchor="end" font-size="13.7" fill="#7e7e7e" transform="rotate(-38.0 577.12 913.20)">Jun 25</text>
<text x="615.76" y="913.20" dy="4.9" text-anchor="end" font-size="13.7" fill="#7e7e7e" transform="rotate(-38.0 615.76 913.20)">Jun 26</text>
<text x="654.40" y="913.20" dy="4.9" text-anchor="end" font-size="13.7" fill="#7e7e7e" transform="rotate(-38.0 654.40 913.20)">Jun 27</text>
<text x="693.04" y="913.20" dy="4.9" text-anchor="end" font-size="13.7" fill="#7e7e7e" transform="rotate(-38.0 693.04 913.20)">Jun 28</text>
<text x="731.68" y="913.20" dy="4.9" text-anchor="end" font-size="13.7" fill="#7e7e7e" transform="rotate(-38.0 731.68 913.20)">Jun 29</text>
<text x="770.32" y="913.20" dy="4.9" text-anchor="end" font-size="13.7" fill="#7e7e7e" transform="rotate(-38.0 770.32 913.20)">Jun 30</text>
<text x="808.96" y="913.20" dy="4.9" text-anchor="end" font-size="13.7" fill="#7e7e7e" transform="rotate(-38.0 808.96 913.20)">Jul 1</text>
<text x="847.60" y="913.20" dy="4.9" text-anchor="end" font-size="13.7" fill="#7e7e7e" transform="rotate(-38.0 847.60 913.20)">Jul 2</text>
<text x="886.24" y="913.20" dy="4.9" text-anchor="end" font-size="13.7" fill="#7e7e7e" transform="rotate(-38.0 886.24 913.20)">Jul 3</text>
<text x="924.88" y="913.20" dy="4.9" text-anchor="end" font-size="13.7" fill="#7e7e7e" transform="rotate(-38.0 924.88 913.20)">Jul 4</text>
<text x="963.52" y="913.20" dy="4.9" text-anchor="end" font-size="13.7" fill="#7e7e7e" transform="rotate(-38.0 963.52 913.20)">Jul 5</text>
<text x="1002.16" y="913.20" dy="4.9" text-anchor="end" font-size="13.7" fill="#7e7e7e" transform="rotate(-38.0 1002.16 913.20)">Jul 6</text>
<text x="1040.80" y="913.20" dy="4.9" text-anchor="end" font-size="13.7" fill="#7e7e7e" transform="rotate(-38.0 1040.80 913.20)">Jul 7</text>
<text x="1079.44" y="913.20" dy="4.9" text-anchor="end" font-size="13.7" fill="#7e7e7e" transform="rotate(-38.0 1079.44 913.20)">Jul 8</text>
<text x="1118.08" y="913.20" dy="4.9" text-anchor="end" font-size="13.7" fill="#7e7e7e" transform="rotate(-38.0 1118.08 913.20)">Jul 9</text>
<text x="1156.72" y="913.20" dy="4.9" text-anchor="end" font-size="13.7" fill="#7e7e7e" transform="rotate(-38.0 1156.72 913.20)">Jul 10</text>
<text x="1195.36" y="913.20" dy="4.9" text-anchor="end" font-size="13.7" fill="#7e7e7e" transform="rotate(-38.0 1195.36 913.20)">Jul 11</text>
<text x="1234.00" y="913.20" dy="4.9" text-anchor="end" font-size="13.7" fill="#7e7e7e" transform="rotate(-38.0 1234.00 913.20)">Jul 12</text>
</svg>
</body></html>
